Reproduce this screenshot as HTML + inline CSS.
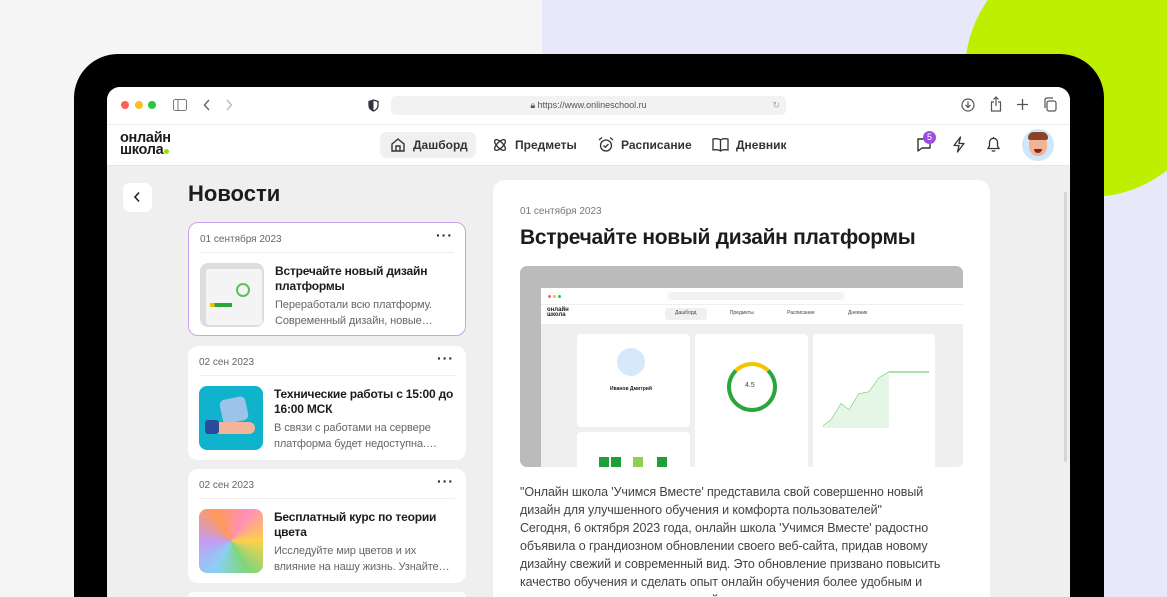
<!DOCTYPE html>
<html style="width:1167px;height:597px;overflow:hidden"><head><meta charset="utf-8">
<style>
*{box-sizing:border-box;margin:0;padding:0}
html,body{overflow:hidden}
body{width:1167px;height:597px;position:relative;background:#f4f5f4;font-family:"Liberation Sans","Noto Sans CJK SC",sans-serif;color:#1c1c1c}
.abs{position:absolute}
.lav{left:542px;top:0;width:625px;height:597px;background:#e8e8fb}
.lime{left:965px;top:-53px;width:250px;height:250px;border-radius:50%;background:#bdf000}
.tab{left:74px;top:54px;width:1030px;height:543px;background:#000;border-radius:44px 44px 0 0}
.scr{left:107px;top:87px;width:963px;height:510px;background:#efefef;border-radius:13px 13px 0 0;overflow:hidden}
.bbar{left:0;top:0;width:963px;height:38px;background:#fff;border-bottom:1px solid #ececec}
.nav{left:0;top:38px;width:963px;height:41px;background:#fff;border-bottom:1px solid #e6e6e6}
.dot{width:8px;height:8px;border-radius:50%;top:14px}
.url{left:284px;top:9px;width:395px;height:19px;background:#f2f2f2;border-radius:5px;font-size:9px;color:#555;text-align:center;line-height:19px}
.ni{font-size:12px;font-weight:bold;color:#333;top:0;line-height:41px}
.card{background:#fff;border-radius:10px;width:278px;height:114px}
.card .d{position:absolute;left:11px;top:11px;font-size:10px;color:#666}
.card .dots{position:absolute;right:12px;top:4px;font-size:14px;font-weight:bold;letter-spacing:1px}
.card .ln{position:absolute;left:11px;right:11px;top:29px;border-top:1px solid #eee}
.card .th{position:absolute;left:11px;top:40px;width:64px;height:64px;border-radius:8px;overflow:hidden}
.card .t{position:absolute;left:86px;top:41px;width:186px;font-size:12px;letter-spacing:-0.2px;font-weight:bold;line-height:15px;color:#1c1c1c}
.card .s{position:absolute;left:86px;top:74px;width:186px;font-size:11px;letter-spacing:-0.1px;line-height:16px;color:#666;white-space:nowrap}
svg{position:absolute}
</style></head><body>
<div class="abs lav"></div>
<div class="abs lime"></div>
<div class="abs tab"></div>
<div class="abs scr">
  <div class="abs bbar">
    <div class="abs dot" style="left:14px;background:#fe5f57"></div>
    <div class="abs dot" style="left:28px;background:#febc2e"></div>
    <div class="abs dot" style="left:41px;background:#28c840"></div>
    <svg style="left:66px;top:12px" width="14" height="12" viewBox="0 0 14 12"><rect x="0.5" y="0.5" width="13" height="11" rx="2" fill="none" stroke="#777"/><line x1="5" y1="0.5" x2="5" y2="11.5" stroke="#777"/></svg>
    <svg style="left:96px;top:12px" width="8" height="12" viewBox="0 0 8 12"><path d="M6 1L1.5 6L6 11" fill="none" stroke="#666" stroke-width="1.4"/></svg>
    <svg style="left:118px;top:12px" width="8" height="12" viewBox="0 0 8 12"><path d="M2 1L6.5 6L2 11" fill="none" stroke="#bbb" stroke-width="1.4"/></svg>
    <svg style="left:261px;top:12px" width="11" height="13" viewBox="0 0 11 13"><path d="M5.5 1L10 2.5V6.5C10 9 8 11 5.5 12C3 11 1 9 1 6.5V2.5Z" fill="none" stroke="#334" stroke-width="1.3"/><path d="M5.5 1V12C3 11 1 9 1 6.5V2.5Z" fill="#334"/></svg>
    <div class="abs url">🔒&#xFE0E; https://www.onlineschool.ru<span style="position:absolute;right:6px;color:#aaa">↻</span></div>
    <svg style="left:854px;top:11px" width="14" height="14" viewBox="0 0 14 14"><circle cx="7" cy="7" r="6" fill="none" stroke="#555" stroke-width="1.2"/><path d="M7 3.5V9.5M4.5 7L7 9.5L9.5 7" fill="none" stroke="#555" stroke-width="1.2"/></svg>
    <svg style="left:883px;top:9px" width="12" height="16" viewBox="0 0 12 16"><path d="M4 6H1.5V15H10.5V6H8M6 1V10M3.5 3.5L6 1L8.5 3.5" fill="none" stroke="#555" stroke-width="1.2"/></svg>
    <svg style="left:909px;top:11px" width="13" height="13" viewBox="0 0 13 13"><path d="M6.5 1V12M1 6.5H12" stroke="#555" stroke-width="1.3"/></svg>
    <svg style="left:936px;top:10px" width="14" height="15" viewBox="0 0 14 15"><rect x="4" y="4" width="9" height="10" rx="2" fill="none" stroke="#555" stroke-width="1.2"/><path d="M2 11V3C2 2 2.5 1 4 1H10" fill="none" stroke="#555" stroke-width="1.2"/></svg>
  </div>
  <div class="abs nav">
    <div class="abs" style="left:13px;top:7px;font-size:14.5px;font-weight:bold;line-height:12px;letter-spacing:-0.3px;color:#1c1c1c">онлайн<br>школа<span style="display:inline-block;width:5px;height:5px;border-radius:50%;background:#9be000;margin-left:1px"></span></div>
    <div class="abs" style="left:273px;top:7px;width:96px;height:26px;background:#f0f0f0;border-radius:7px"></div>
    <svg style="left:283px;top:12px" width="16" height="16" viewBox="0 0 16 16"><path d="M2 7L8 2L14 7V14H2Z M6 14V9H10V14" fill="none" stroke="#333" stroke-width="1.4"/></svg>
    <div class="abs ni" style="left:306px">Дашборд</div>
    <svg style="left:385px;top:12px" width="16" height="16" viewBox="0 0 16 16"><ellipse cx="8" cy="8" rx="7" ry="3" transform="rotate(45 8 8)" fill="none" stroke="#333" stroke-width="1.3"/><ellipse cx="8" cy="8" rx="7" ry="3" transform="rotate(-45 8 8)" fill="none" stroke="#333" stroke-width="1.3"/></svg>
    <div class="abs ni" style="left:408px">Предметы</div>
    <svg style="left:491px;top:11px" width="16" height="17" viewBox="0 0 16 17"><circle cx="8" cy="9.5" r="5.5" fill="none" stroke="#333" stroke-width="1.3"/><path d="M1 4L4 1.5M15 4L12 1.5M5.5 9.5L7.3 11.3L10.5 8" fill="none" stroke="#333" stroke-width="1.3"/></svg>
    <div class="abs ni" style="left:514px">Расписание</div>
    <svg style="left:605px;top:12px" width="17" height="15" viewBox="0 0 17 15"><path d="M8.5 3C6.5 1.5 3.5 1.5 1 2V13C3.5 12.5 6.5 12.5 8.5 14C10.5 12.5 13.5 12.5 16 13V2C13.5 1.5 10.5 1.5 8.5 3ZM8.5 3V14" fill="none" stroke="#333" stroke-width="1.3"/></svg>
    <div class="abs ni" style="left:629px">Дневник</div>
    <svg style="left:809px;top:12px" width="16" height="16" viewBox="0 0 16 16"><path d="M2 2H14V11H6L2 14Z" fill="none" stroke="#333" stroke-width="1.4" stroke-linejoin="round"/></svg>
    <div class="abs" style="left:816px;top:6px;width:13px;height:13px;border-radius:50%;background:#9b4de0;color:#fff;font-size:9px;text-align:center;line-height:13px">5</div>
    <svg style="left:845px;top:11px" width="14" height="17" viewBox="0 0 14 17"><path d="M8.5 1L2 9.5H7L5.5 16L12 7.5H7Z" fill="none" stroke="#333" stroke-width="1.3" stroke-linejoin="round"/></svg>
    <svg style="left:879px;top:11px" width="15" height="17" viewBox="0 0 15 17"><path d="M2 12.5H13L11.5 10V6.5C11.5 4 9.8 2.3 7.5 2.3C5.2 2.3 3.5 4 3.5 6.5V10ZM7.5 1V2.3M5.8 14.5C6.3 15.3 8.7 15.3 9.2 14.5" fill="none" stroke="#333" stroke-width="1.3"/></svg>
    <div class="abs" style="left:915px;top:4px;width:32px;height:32px;border-radius:50%;background:#cfe7fb"></div>
    <div class="abs" style="left:922px;top:9px;width:18px;height:22px;border-radius:45%;background:#f1b395"></div>
    <div class="abs" style="left:921px;top:7px;width:20px;height:8px;border-radius:8px 8px 3px 3px;background:#8a4326"></div>
    <div class="abs" style="left:927px;top:24px;width:8px;height:4px;border-radius:0 0 4px 4px;background:#7a2a20"></div>
  </div>
  <!-- content -->
  <div class="abs" style="left:16px;top:96px;width:29px;height:29px;background:#fff;border-radius:7px"></div>
  <svg style="left:26px;top:104px" width="8" height="12" viewBox="0 0 8 12"><path d="M6 1.5L2 6L6 10.5" fill="none" stroke="#222" stroke-width="1.6"/></svg>
  <div class="abs" style="left:81px;top:94px;font-size:22px;font-weight:bold;color:#1c1c1c">Новости</div>

  <div class="abs card" style="left:81px;top:135px;border:1.5px solid #c9a3f0">
    <div class="d">01 сентября 2023</div><div class="dots">···</div><div class="ln"></div>
    <div class="th" style="background:#ddd"><div style="position:absolute;left:6px;top:6px;width:56px;height:56px;background:#f4f4f4;border-radius:3px"></div><div style="position:absolute;left:36px;top:20px;width:14px;height:14px;border-radius:50%;border:2px solid #5bc25b"></div><div style="position:absolute;left:10px;top:40px;width:22px;height:4px;background:linear-gradient(90deg,#f5c400 20%,#2aa63a 20%)"></div></div>
    <div class="t">Встречайте новый дизайн платформы</div>
    <div class="s">Переработали всю платформу.<br>Современный дизайн, новые…</div>
  </div>
  <div class="abs card" style="left:81px;top:259px">
    <div class="d">02 сен 2023</div><div class="dots">···</div><div class="ln"></div>
    <div class="th" style="background:#10b3cc"><div style="position:absolute;left:22px;top:12px;width:26px;height:24px;background:#9cc4ea;border-radius:5px;transform:rotate(-12deg)"></div><div style="position:absolute;left:8px;top:36px;width:48px;height:12px;background:#f2b49a;border-radius:8px"></div><div style="position:absolute;left:6px;top:34px;width:14px;height:14px;background:#2a4a9a;border-radius:3px"></div></div>
    <div class="t" style="white-space:nowrap">Технические работы с 15:00 до<br>16:00 МСК</div>
    <div class="s">В связи с работами на сервере<br>платформа будет недоступна.…</div>
  </div>
  <div class="abs card" style="left:81px;top:382px">
    <div class="d">02 сен 2023</div><div class="dots">···</div><div class="ln"></div>
    <div class="th" style="background:conic-gradient(from 30deg,#ff8fb8,#ffd04a,#7fd67a,#8ad0f5,#c39cf5,#ff9a5a,#ff8fb8)"></div>
    <div class="t">Бесплатный курс по теории цвета</div>
    <div class="s">Исследуйте мир цветов и их<br>влияние на нашу жизнь. Узнайте…</div>
  </div>
  <div class="abs card" style="left:81px;top:505px;height:5px;border-radius:10px 10px 0 0"></div>

  <div class="abs" style="left:386px;top:93px;width:497px;height:417px;background:#fff;border-radius:12px 12px 0 0;overflow:hidden">
    <div class="abs" style="left:27px;top:26px;font-size:10px;color:#777">01 сентября 2023</div>
    <div class="abs" style="left:27px;top:46px;font-size:21px;letter-spacing:-0.3px;font-weight:bold;color:#1c1c1c">Встречайте новый дизайн платформы</div>
    <div class="abs" style="left:27px;top:86px;width:443px;height:201px;background:#bbb;border-radius:7px;overflow:hidden">
      <div class="abs" style="left:21px;top:22px;width:430px;height:190px;background:#efefef">
        <div class="abs" style="left:0;top:0;width:430px;height:17px;background:#fff;border-bottom:1px solid #eee"></div>
        <div class="abs" style="left:7px;top:7px;width:3px;height:3px;border-radius:50%;background:#fe5f57"></div>
        <div class="abs" style="left:12px;top:7px;width:3px;height:3px;border-radius:50%;background:#febc2e"></div>
        <div class="abs" style="left:17px;top:7px;width:3px;height:3px;border-radius:50%;background:#28c840"></div>
        <div class="abs" style="left:127px;top:4px;width:176px;height:8px;background:#f2f2f2;border-radius:3px"></div>
        <div class="abs" style="left:0;top:17px;width:430px;height:19px;background:#fff"></div>
        <div class="abs" style="left:6px;top:20px;font-size:6px;font-weight:bold;line-height:5px">онлайн<br>школа</div>
        <div class="abs" style="left:124px;top:20px;width:42px;height:12px;background:#f0f0f0;border-radius:3px"></div>
        <div class="abs" style="left:134px;top:22px;font-size:5px;color:#444;word-spacing:32px">Дашборд Предметы Расписание Дневник</div>
        <div class="abs" style="left:36px;top:46px;width:113px;height:93px;background:#fff;border-radius:4px"><div class="abs" style="left:40px;top:14px;width:28px;height:28px;border-radius:50%;background:#d6e8fb"></div><div class="abs" style="left:33px;top:52px;font-size:5px;font-weight:bold">Иванов Дмитрий</div></div>
        <div class="abs" style="left:36px;top:144px;width:113px;height:50px;background:#fff;border-radius:4px"><div class="abs" style="left:22px;top:25px;width:10px;height:10px;background:#1f9e3a"></div><div class="abs" style="left:34px;top:25px;width:10px;height:10px;background:#1f9e3a"></div><div class="abs" style="left:56px;top:25px;width:10px;height:10px;background:#8fd14f"></div><div class="abs" style="left:80px;top:25px;width:10px;height:10px;background:#1f9e3a"></div></div>
        <div class="abs" style="left:154px;top:46px;width:113px;height:150px;background:#fff;border-radius:4px"><div class="abs" style="left:32px;top:28px;width:50px;height:50px;border-radius:50%;border:4px solid #2aa63a;border-top-color:#f5c400"></div><div class="abs" style="left:50px;top:48px;font-size:7px;color:#444">4.5</div></div>
        <div class="abs" style="left:272px;top:46px;width:122px;height:150px;background:#fff;border-radius:4px"><svg style="left:8px;top:30px" width="110" height="64" viewBox="0 0 110 64"><path d="M2 62L10 56L20 40L28 46L38 30L48 28L58 14L68 8L108 8" fill="none" stroke="#5bc25b" stroke-width="1"/><path d="M2 62L10 56L20 40L28 46L38 30L48 28L58 14L68 8V64H2Z" fill="#e6f6e6"/></svg></div>
      </div>
    </div>
    <div class="abs" style="left:27px;top:303px;width:432px;font-size:12.5px;letter-spacing:-0.1px;line-height:18px;color:#444">"Онлайн школа 'Учимся Вместе' представила свой совершенно новый дизайн для улучшенного обучения и комфорта пользователей"<br>Сегодня, 6 октября 2023 года, онлайн школа 'Учимся Вместе' радостно объявила о грандиозном обновлении своего веб-сайта, придав новому дизайну свежий и современный вид. Это обновление призвано повысить качество обучения и сделать опыт онлайн обучения более удобным и приятным для всех пользователей.</div>
  </div>
  <div class="abs" style="left:957px;top:105px;width:3px;height:270px;background:#d6d6d6;border-radius:2px"></div>
</div>
</body></html>
